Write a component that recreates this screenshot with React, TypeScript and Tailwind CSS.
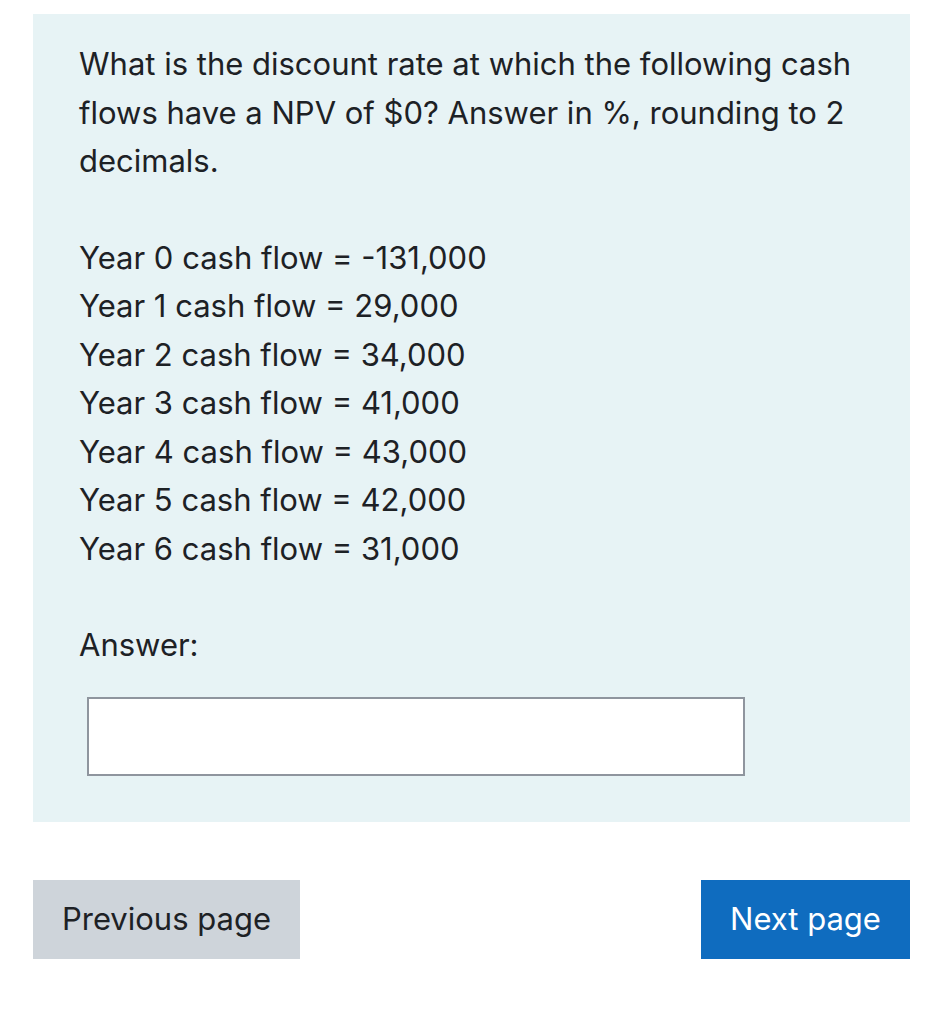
export default function App() {
  const flows = ['-131,000', '29,000', '34,000', '41,000', '43,000', '42,000', '31,000'];

  return (
    <div
      className="min-h-screen bg-white pt-[14px] text-[#1d2125]"
      style={{ fontFamily: 'Inter, "Noto Sans", sans-serif' }}
    >
      <div className="mx-[33px] bg-[#e7f3f5] pl-[46px] pr-[30px] pt-[26px] pb-[46px] text-[31px] leading-[48.5px]">
        <p>
          What is the discount rate at which the following cash
          <br />
          flows have a NPV of $0? Answer in %, rounding to 2
          <br />
          decimals.
        </p>
        <div className="mt-[48px]">
          {flows.map((v, i) => (
            <p key={i}>
              Year {i} cash flow = {v}
            </p>
          ))}
        </div>
        <p className="mt-[48px]">Answer:</p>
        <div className="mt-[27px] pl-[8px]">
          <input
            type="text"
            className="block h-[79px] w-[658px] border-2 border-[#8f959e] bg-white px-3 outline-none"
          />
        </div>
      </div>

      <div className="mx-[33px] mt-[58px] flex justify-between">
        <button
          type="button"
          className="h-[79px] w-[267px] bg-[#ced4da] text-[31px] text-[#1d2125]"
        >
          Previous page
        </button>
        <button
          type="button"
          className="h-[79px] w-[209px] bg-[#0f6cbf] text-[31px] text-white"
        >
          Next page
        </button>
      </div>
    </div>
  );
}
